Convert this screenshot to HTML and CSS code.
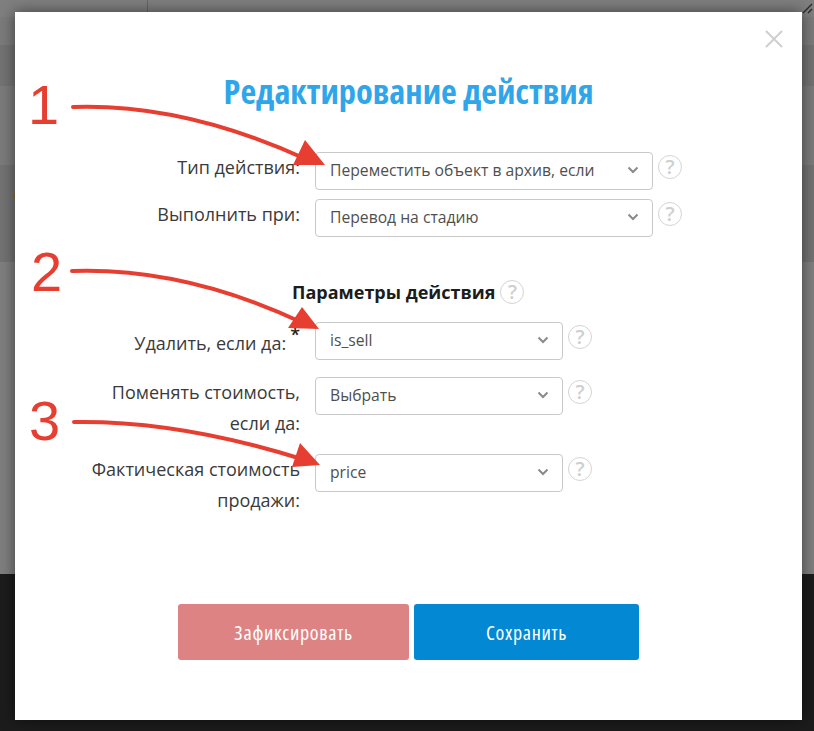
FILE: index.html
```html
<!DOCTYPE html>
<html lang="ru">
<head>
<meta charset="utf-8">
<title>Редактирование действия</title>
<link rel="stylesheet" href="styles.css">
</head>
<body>
<div class="backdrop">
  <div class="bg-top">
    <div class="bg-band bg-h17 bg-light"><span class="bg-rule"></span></div>
    <div class="bg-band bg-h28 bg-mid"></div>
    <div class="bg-band bg-h41 bg-dark"></div>
    <div class="bg-band bg-h79 bg-mid"></div>
    <div class="bg-band bg-h97 bg-dark"></div>
    <div class="bg-band bg-rest bg-light"></div>
  </div>
  <div class="bg-bottom"></div>
  <span class="bg-dot"></span>
  <svg class="resize-grip" width="14" height="14" viewBox="0 0 14 14"><path d="M1 11 L10 2 M6 11 L10 7" stroke="#2a2a2a" stroke-width="1.4" fill="none"/></svg>
</div>
<main class="modal">
  <svg class="close" width="18" height="18" viewBox="0 0 18 18"><path d="M1 1 L17 17 M17 1 L1 17" stroke="#cfcfcf" stroke-width="2" fill="none"/></svg>
  <h1 class="title">Редактирование действия</h1>

  <div class="row row-first">
    <label class="label">Тип действия:</label>
    <div class="select select-wide"><span>Переместить объект в архив, если</span><svg class="chev" width="12" height="8" viewBox="0 0 12 8"><path d="M1.5 1.5 L6 6 L10.5 1.5" stroke="#8a8a8a" stroke-width="2" fill="none"/></svg></div>
    <span class="help">?</span>
  </div>
  <div class="row row-second">
    <label class="label">Выполнить при:</label>
    <div class="select select-wide"><span>Перевод на стадию</span><svg class="chev" width="12" height="8" viewBox="0 0 12 8"><path d="M1.5 1.5 L6 6 L10.5 1.5" stroke="#8a8a8a" stroke-width="2" fill="none"/></svg></div>
    <span class="help">?</span>
  </div>

  <div class="section"><span>Параметры действия</span><span class="help help-section">?</span></div>

  <div class="row row-delete">
    <label class="label label-req">Удалить, если да:<sup class="req">*</sup></label>
    <div class="select"><span>is_sell</span><svg class="chev" width="12" height="8" viewBox="0 0 12 8"><path d="M1.5 1.5 L6 6 L10.5 1.5" stroke="#8a8a8a" stroke-width="2" fill="none"/></svg></div>
    <span class="help">?</span>
  </div>
  <div class="row row-cost">
    <label class="label">Поменять стоимость, если да:</label>
    <div class="select"><span>Выбрать</span><svg class="chev" width="12" height="8" viewBox="0 0 12 8"><path d="M1.5 1.5 L6 6 L10.5 1.5" stroke="#8a8a8a" stroke-width="2" fill="none"/></svg></div>
    <span class="help">?</span>
  </div>
  <div class="row row-price">
    <label class="label">Фактическая стоимость продажи:</label>
    <div class="select"><span>price</span><svg class="chev" width="12" height="8" viewBox="0 0 12 8"><path d="M1.5 1.5 L6 6 L10.5 1.5" stroke="#8a8a8a" stroke-width="2" fill="none"/></svg></div>
    <span class="help">?</span>
  </div>

  <div class="actions">
    <button class="btn btn-fix">Зафиксировать</button>
    <button class="btn btn-save">Сохранить</button>
  </div>
</main>

<span class="num num-1">1</span>
<span class="num num-2">2</span>
<span class="num num-3">3</span>
<svg class="arrows" width="814" height="731" viewBox="0 0 814 731">
  <g fill="none" stroke="#e63f32" stroke-width="4" stroke-linecap="round">
    <path d="M73 107 C130 105 210 115 308 160"/>
    <path d="M72 271 C130 269 210 279 303 323"/>
    <path d="M74 422 C140 421 220 433 305 460"/>
  </g>
  <g fill="#e63f32">
    <polygon points="305,140 325,165 293,165"/>
    <polygon points="302,307 319,329 288,328"/>
    <polygon points="300,443 320,465 292,467"/>
  </g>
</svg>
</body>
</html>
```
FILE: styles.css
```css
* { box-sizing: border-box; }
html, body { margin: 0; padding: 0; }
body {
  width: 814px;
  height: 731px;
  position: relative;
  overflow: hidden;
  font-family: "Open Sans", "DejaVu Sans", sans-serif;
  background: #1c1c1c;
}
.backdrop { position: absolute; inset: 0; display: flex; flex-direction: column; }
.bg-top { height: 574px; display: flex; flex-direction: column; }
.bg-band { position: relative; }
.bg-h17 { height: 17px; }
.bg-h28 { height: 28px; }
.bg-h41 { height: 41px; }
.bg-h79 { height: 79px; }
.bg-h97 { height: 97px; }
.bg-rest { flex: 1; }
.bg-light { background: #7f7f7f; }
.bg-mid { background: #7b7b7b; }
.bg-dark { background: #737373; }
.bg-rule { position: absolute; left: 147px; top: 0; bottom: 0; width: 1px; background: #666; }
.bg-dot { position: absolute; left: 14px; top: 193px; width: 1px; height: 4px; background: #8a6a1c; }
.bg-bottom { flex: 1; background: #1c1c1c; }
.resize-grip { position: absolute; top: 2px; left: 802px; }

.modal {
  position: absolute;
  left: 15px;
  top: 12px;
  width: 787px;
  height: 708px;
  background: #fff;
  box-shadow: 0 0 14px rgba(0,0,0,.5);
  padding-top: 59px;
}
.close { position: absolute; left: 750px; top: 18px; }
.title {
  margin: 0;
  height: 40px;
  text-align: center;
  font-size: 34.4px;
  line-height: 40px;
  font-weight: 700;
  font-stretch: 75%;
  color: #2fa6e9;
}
.row { display: flex; align-items: flex-start; }
.row-first { margin-top: 41px; }
.row-second { margin-top: 9px; }
.row-delete { margin-top: 18px; }
.row-cost { margin-top: 17px; }
.row-price { margin-top: 15px; }
.label {
  width: 285px;
  text-align: right;
  font-size: 18px;
  line-height: 31px;
  color: #3a3a3a;
  margin-right: 15px;
  flex: none;
  padding-left: 70px;
}
.label-req { padding-top: 6px; }
.select {
  width: 248px;
  height: 38px;
  border: 1px solid #c9c9c9;
  border-radius: 4px;
  background: #fff;
  display: flex;
  align-items: center;
  justify-content: space-between;
  padding: 0 13px 2px 14px;
  font-size: 15.7px;
  color: #4f4f4f;
  flex: none;
}
.select-wide { width: 338px; }
.help {
  width: 24px;
  height: 24px;
  margin: 3px 0 0 5px;
  border: 1px solid #d4d4d4;
  border-radius: 50%;
  color: #cfcfcf;
  font-weight: 600;
  font-size: 20px;
  line-height: 22px;
  text-align: center;
  flex: none;
}
.section {
  margin: 43px 0 0 277px;
  display: flex;
  align-items: center;
  height: 24px;
  font-size: 18px;
  font-weight: 700;
  color: #1c1c1c;
}
.help-section { margin: 0 0 0 5px; }
.req {
  font-size: 18px;
  font-weight: 600;
  line-height: 0;
  margin-left: 4px;
  color: #222;
  position: relative;
  top: -2px;
}
.actions {
  margin-top: 88px;
  display: flex;
  justify-content: flex-start;
  gap: 5px;
  padding-left: 163px;
}
.btn {
  height: 56px;
  border: 0;
  border-radius: 3px;
  color: #fff;
  font-family: inherit;
  font-size: 20px;
  font-weight: 400;
  font-stretch: 75%;
  letter-spacing: .7px;
}
.btn-fix { width: 231px; background: #de8383; }
.btn-save { width: 225px; background: #0388d4; }

.num {
  position: absolute;
  font-family: "Liberation Sans", Arial, sans-serif;
  font-size: 56px;
  line-height: 56px;
  color: #e63f32;
}
.num-1 { left: 28px; top: 77px; }
.num-2 { left: 31px; top: 244px; }
.num-3 { left: 29px; top: 393px; }
.arrows { position: absolute; left: 0; top: 0; pointer-events: none; }
```
